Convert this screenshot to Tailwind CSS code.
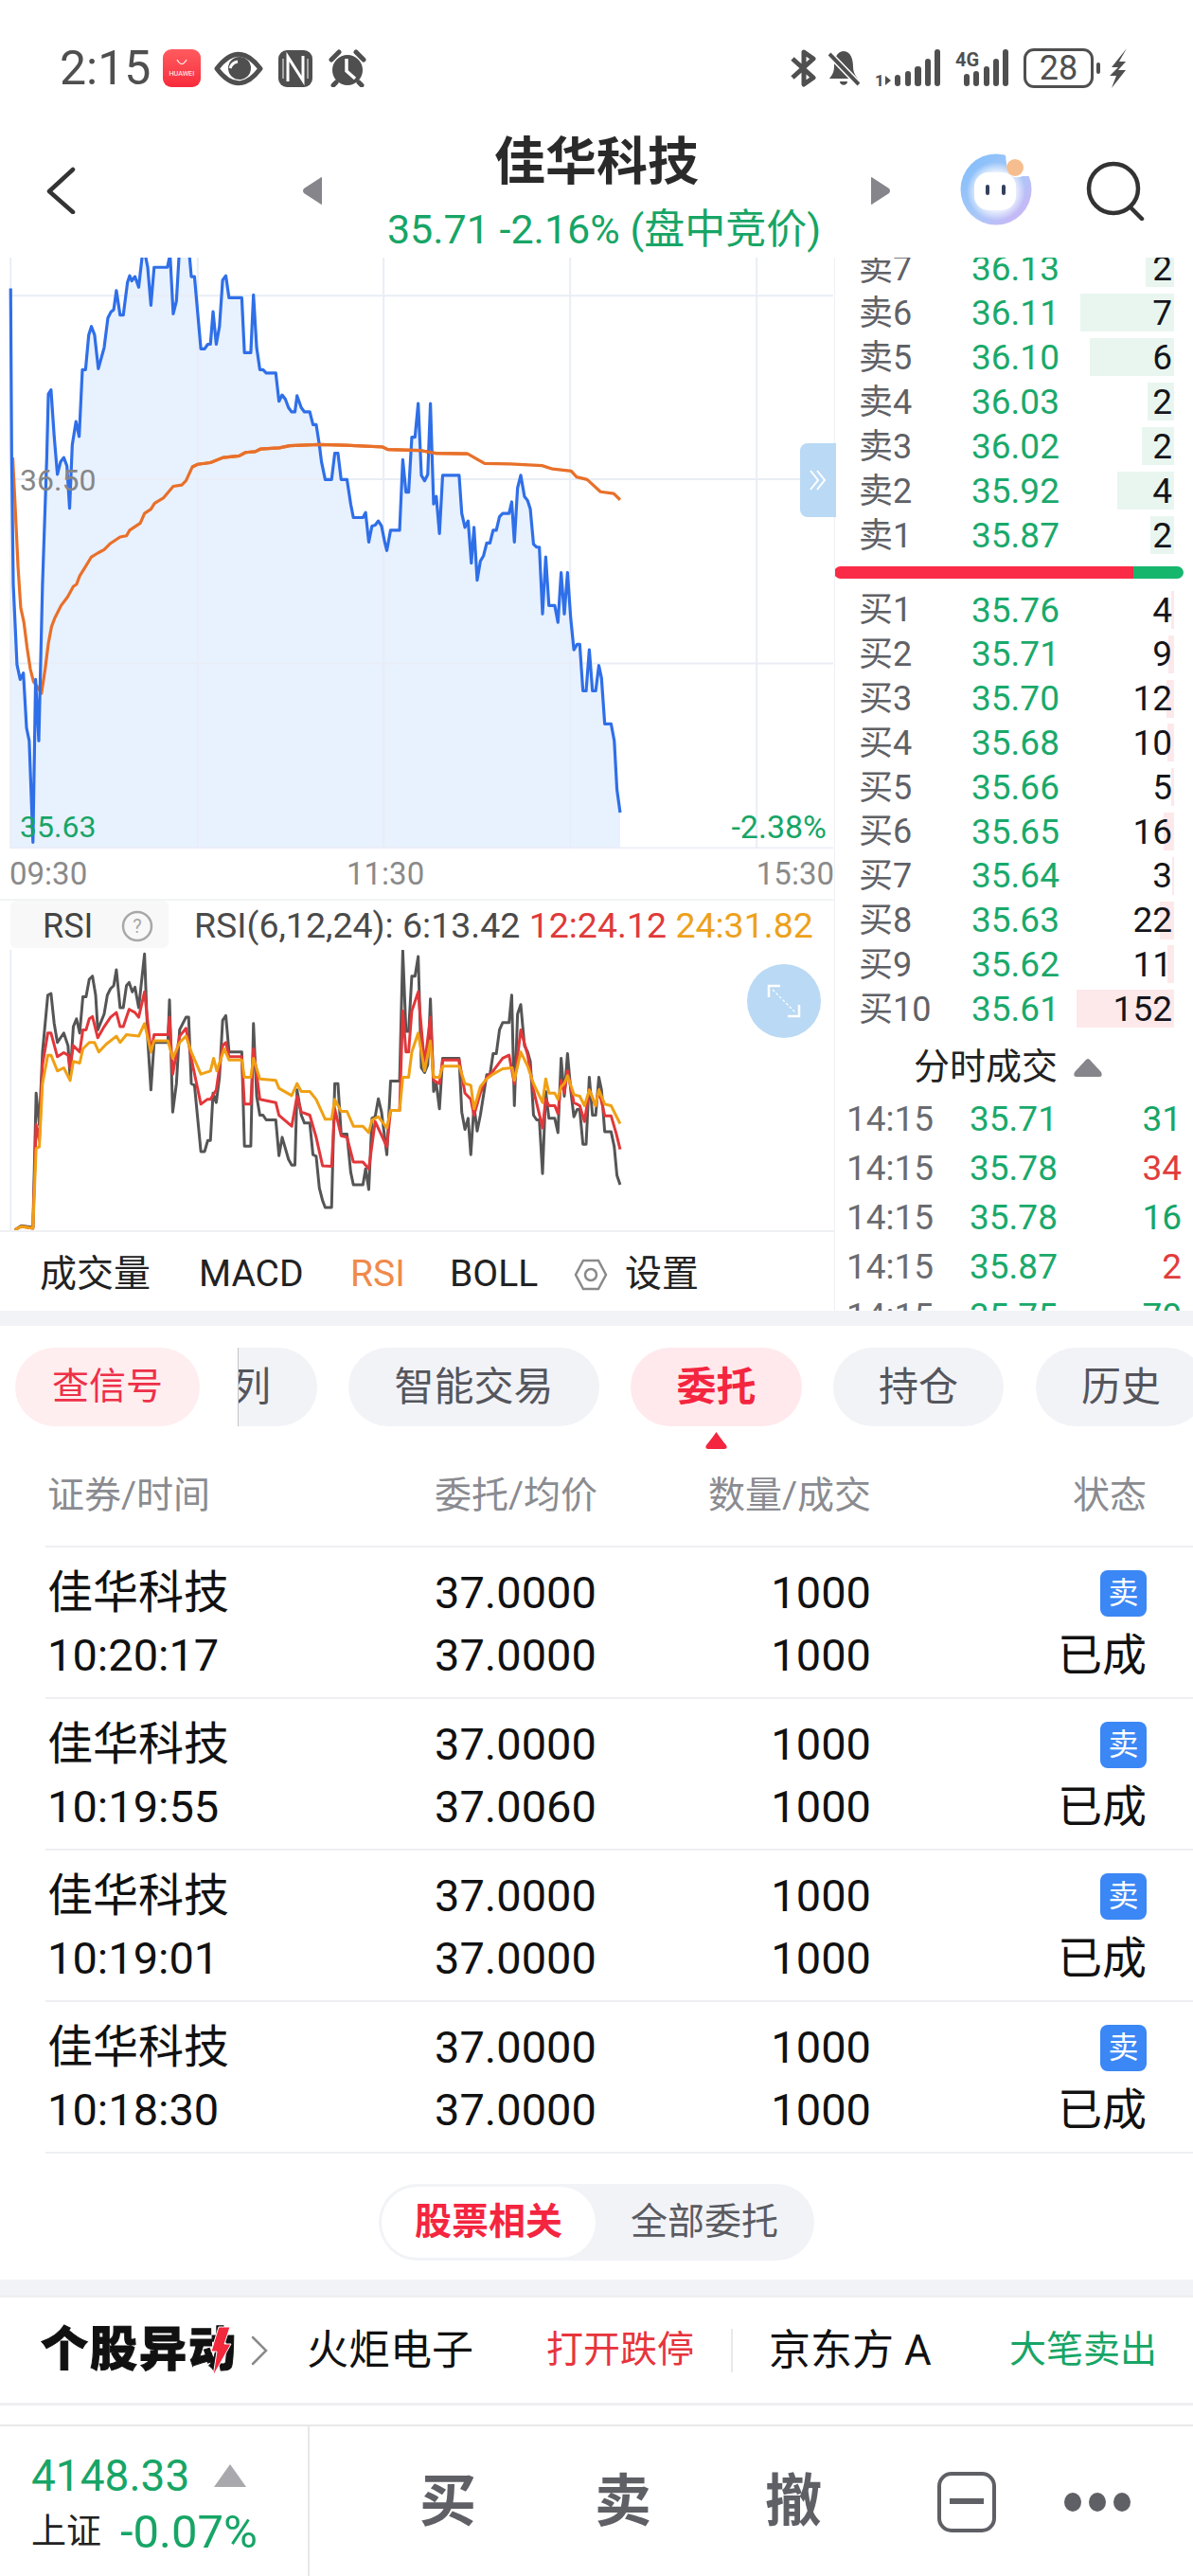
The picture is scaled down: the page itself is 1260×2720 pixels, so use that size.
<!DOCTYPE html>
<html lang="zh-CN">
<head>
  <meta charset="UTF-8" />
  <title>佳华科技</title>
  <script src="https://cdn.jsdelivr.net/npm/@tailwindcss/browser@4"></script>
</head>
<body class="bg-white text-[#111] font-['Roboto','Noto_Sans_CJK_SC',sans-serif]">
<div class="w-[1260px] h-[2720px] overflow-hidden">

  <!-- status bar -->
  <div class="h-[130px] flex items-start justify-between pl-[63px] pr-[70px] pt-[50px] text-[#4f4f4f]">
    <div class="flex items-center h-[44px]">
      <span class="text-[50px] leading-none w-[109px]">2:15</span>
      <div class="w-[40px] h-[40px] rounded-[9px] bg-gradient-to-b from-[#ff5a5f] to-[#f8283c] flex flex-col items-center justify-center text-white">
        <svg width="14" height="8" viewBox="0 0 14 8" fill="none" stroke="white" stroke-width="1.2"><path d="M2 1 Q7 10 12 1"/></svg>
        <span class="text-[8px] leading-[9px] mt-[3px] scale-x-90">HUAWEI</span>
      </div>
      <svg class="ml-[14px]" width="52" height="37" viewBox="0 0 52 37"><path d="M3 18.500 Q26 -12 49 18.500 Q26 49 3 18.500Z" fill="none" stroke="#4f4f4f" stroke-width="5" stroke-linejoin="round"/><circle cx="27" cy="18" r="12" fill="#4f4f4f"/><path d="M17 18 Q19 12 25 11" fill="none" stroke="white" stroke-width="3"/></svg>
      <svg class="ml-[16px]" width="36" height="39" viewBox="0 0 36 39"><rect width="36" height="39" rx="9" fill="#4f4f4f"/><path d="M10 33 V7 L26 32 V6" fill="none" stroke="white" stroke-width="3"/><path d="M5 9 V30 M31 9 V30" stroke="white" stroke-width="1"/></svg>
      <svg class="ml-[17px]" width="40" height="40" viewBox="0 0 40 40" fill="none"><circle cx="20" cy="22" r="16" fill="#4f4f4f"/><path d="M19 10 V23 L28 31" stroke="white" stroke-width="3.500"/><path d="M3 11 L11 3 M37 11 L29 3 M8 35 L5 38 M32 35 L35 38" stroke="#4f4f4f" stroke-width="5" stroke-linecap="round"/></svg>
    </div>
    <div class="flex items-center h-[44px]">
      <svg width="28" height="40" viewBox="0 0 28 40" fill="none" stroke="#4f4f4f" stroke-width="5" stroke-linejoin="round"><path d="M3 10 L25 30 L15 37 V3 L25 10 L3 30"/></svg>
      <svg class="ml-[13px]" width="33" height="40" viewBox="0 0 33 40"><path d="M16 2 C8 2 6 12 6 18 C6 24 4 27 1 31 H31 C28 27 26 24 26 18 C26 12 24 2 16 2Z M12 34 H20 C20 39 12 39 12 34Z" fill="#4f4f4f"/><path d="M1 5 L32 37" stroke="white" stroke-width="7"/><path d="M1 5 L32 37" stroke="#4f4f4f" stroke-width="4"/></svg>
      <svg class="ml-[16px] overflow-visible" width="69" height="40" viewBox="0 0 69 40" fill="#4f4f4f"><text x="0" y="39" font-size="17" font-weight="700" font-family="Roboto">1</text><path d="M11 28 L17 33 L11 38Z"/><rect x="21" y="27" width="6" height="12" rx="3"/><rect x="32" y="23" width="6" height="16" rx="3"/><rect x="42" y="18" width="7" height="21" rx="3"/><rect x="53" y="10" width="6" height="29" rx="3"/><rect x="63" y="0" width="6" height="39" rx="3"/></svg>
      <svg class="ml-[16px] overflow-visible" width="56" height="40" viewBox="0 0 56 40" fill="#4f4f4f"><text x="0" y="18" font-size="20" font-weight="700" font-family="Roboto">4G</text><rect x="9" y="26" width="6" height="13" rx="3"/><rect x="19" y="23" width="6" height="16" rx="3"/><rect x="30" y="18" width="6" height="21" rx="3"/><rect x="40" y="10" width="6" height="29" rx="3"/><rect x="50" y="0" width="6" height="39" rx="3"/></svg>
      <div class="ml-[16px] w-[74px] h-[42px] border-[3px] border-[#4f4f4f] rounded-[11px] flex items-center justify-center text-[36px] leading-none">28</div>
      <div class="ml-[3px] w-[4px] h-[12px] rounded-full bg-[#4f4f4f]"></div>
      <svg class="ml-[10px]" width="18" height="42" viewBox="0 0 18 42" fill="#4f4f4f"><path d="M18 0 L2 20 H9 L0 29 H7 L2 42 L17 23 H9 L17 14 H10Z"/></svg>
    </div>
  </div>

  <!-- title bar -->
  <div class="h-[142px] relative flex items-center">
    <svg class="absolute left-[48px] top-[46px]" width="32" height="50" viewBox="0 0 32 50" fill="none" stroke="#333" stroke-width="4.5" stroke-linecap="round" stroke-linejoin="round"><path d="M29 3 L4 26 L29 48"/></svg>
    <svg class="absolute left-[320px] top-[57px]" width="20" height="29" viewBox="0 0 20 29" fill="#85858b"><path d="M20 1 V28 Q20 30 18 28 L1 17 Q-1 14.500 1 12 L18 1 Q20 -1 20 1Z"/></svg>
    <div class="w-full text-center">
      <div class="text-[54px] leading-[62px] font-bold text-[#2a2a2a] mt-[4px]">佳华科技</div>
      <div class="text-[43px] leading-[46px] text-[#17a566] mt-[16px] pl-[16px]">35.71 -2.16% (盘中竞价)</div>
    </div>
    <svg class="absolute left-[920px] top-[57px]" width="20" height="29" viewBox="0 0 20 29" fill="#85858b"><path d="M0 1 V28 Q0 30 2 28 L19 17 Q21 14.500 19 12 L2 1 Q0 -1 0 1Z"/></svg>
    <svg class="absolute left-[1014px] top-[32px]" width="76" height="76" viewBox="0 0 76 76">
      <defs>
        <linearGradient id="ava" x1="0" y1="0" x2="1" y2="1"><stop offset="0" stop-color="#7cbcfb"/><stop offset="0.55" stop-color="#a9c8f8"/><stop offset="1" stop-color="#d5b0f5"/></linearGradient>
        <radialGradient id="avaIn"><stop offset="0.55" stop-color="#fff"/><stop offset="1" stop-color="#fff" stop-opacity="0"/></radialGradient>
      </defs>
      <circle cx="38" cy="38" r="37.500" fill="url(#ava)"/>
      <circle cx="38" cy="40" r="31" fill="url(#avaIn)"/>
      <path d="M48 2 L76 2 L76 24 L66 24 Q56 28 50 20Z" fill="white"/>
      <rect x="15" y="20" width="44" height="40" rx="15" fill="white"/>
      <rect x="27" y="33" width="4" height="11" rx="2" fill="#33415c"/><rect x="44" y="33" width="4" height="11" rx="2" fill="#33415c"/>
      <circle cx="58" cy="15" r="9" fill="#f6bd8e"/>
    </svg>
    <svg class="absolute left-[1146px] top-[39px]" width="64" height="64" viewBox="0 0 64 64" fill="none" stroke="#333" stroke-width="4.500"><circle cx="30" cy="30" r="26"/><path d="M48 50 L60 62" stroke-linecap="round"/></svg>
  </div>

  <!-- quote panel -->
  <div class="h-[1112px] flex overflow-hidden">
    <div class="w-[882px] shrink-0 border-r border-[#eef0f3] relative">
      <div class="relative h-[624px]">
        <svg class="absolute inset-0" width="880" height="624" viewBox="0 27 1568 1398" preserveAspectRatio="none">
          <polygon fill="#e8f1fe" points="20,1425 20,100 22,500 25,800 32,990 38,1025 44,1010 50,1140 55,1170 62,1410 67,1025 73,1170 80,800 88,500 91,350 96,340 102,450 108,540 114,510 120,500 126,520 131,620 136,470 143,415 149,450 155,292 161,292 167,210 172,190 178,210 185,290 196,240 203,170 209,155 214,150 219,105 226,163 232,163 240,85 244,70 248,82 254,72 261,97 267,30 270,0 278,50 284,140 290,50 315,50 320,20 326,160 332,130 338,0 355,0 360,72 366,72 378,243 385,243 391,232 396,232 401,155 407,232 413,190 419,80 425,70 431,122 455,122 460,252 472,252 477,115 483,240 489,292 495,292 501,300 519,300 525,367 531,352 537,362 543,382 549,392 555,392 559,354 567,382 573,392 583,392 589,422 595,422 601,470 605,510 612,552 624,552 630,490 636,490 642,552 653,552 660,610 665,642 683,642 688,630 694,700 700,662 706,660 712,650 718,662 724,700 728,720 735,672 752,672 758,505 764,582 769,582 775,452 781,452 787,372 793,542 799,555 805,540 810,372 816,610 821,592 827,680 833,542 864,542 869,632 875,665 881,650 887,750 892,665 898,790 904,745 910,732 916,702 922,702 928,672 934,672 940,640 946,632 958,632 963,605 968,700 974,572 980,542 987,592 993,602 998,622 1004,705 1010,712 1015,712 1021,870 1027,735 1033,850 1044,850 1050,890 1056,772 1062,870 1068,772 1074,880 1080,955 1086,942 1091,942 1097,1052 1103,1052 1109,955 1115,1052 1121,1052 1127,992 1132,1022 1138,1130 1150,1130 1156,1170 1161,1285 1167,1340 1167,1425"/>
          <path fill="none" stroke="#e9edf5" stroke-width="2" vector-effect="non-scaling-stroke" d="M20 117 H1568 M20 551 H1568 M20 987 H1568 M20 1424 H1568 M20 0 V1425 M372 0 V1425 M722 0 V1425 M1073 0 V1425 M1424 0 V1425"/>
          <polyline fill="none" stroke="#e8702a" stroke-width="3.200" vector-effect="non-scaling-stroke" stroke-linejoin="round" points="24,500 28,600 34,760 39,855 45,890 51,950 57,1000 63,1030 69,1040 78,1058 85,1000 91,940 97,900 103,880 115,850 127,830 138,805 144,800 150,780 160,760 172,735 184,726 196,718 208,703 226,688 238,685 244,672 264,655 272,632 284,622 291,608 308,595 326,568 342,565 350,555 362,522 372,516 396,512 420,500 450,496 462,488 480,486 490,480 526,477 545,472 600,469 650,471 720,475 730,481 790,483 820,490 880,491 912,514 960,515 1020,519 1040,527 1075,532 1085,546 1105,552 1130,581 1155,585 1167,600"/>
          <polyline fill="none" stroke="#2f6fe8" stroke-width="3.200" vector-effect="non-scaling-stroke" stroke-linejoin="round" points="20,100 22,500 25,800 32,990 38,1025 44,1010 50,1140 55,1170 62,1410 67,1025 73,1170 80,800 88,500 91,350 96,340 102,450 108,540 114,510 120,500 126,520 131,620 136,470 143,415 149,450 155,292 161,292 167,210 172,190 178,210 185,290 196,240 203,170 209,155 214,150 219,105 226,163 232,163 240,85 244,70 248,82 254,72 261,97 267,30 270,0 278,50 284,140 290,50 315,50 320,20 326,160 332,130 338,0 355,0 360,72 366,72 378,243 385,243 391,232 396,232 401,155 407,232 413,190 419,80 425,70 431,122 455,122 460,252 472,252 477,115 483,240 489,292 495,292 501,300 519,300 525,367 531,352 537,362 543,382 549,392 555,392 559,354 567,382 573,392 583,392 589,422 595,422 601,470 605,510 612,552 624,552 630,490 636,490 642,552 653,552 660,610 665,642 683,642 688,630 694,700 700,662 706,660 712,650 718,662 724,700 728,720 735,672 752,672 758,505 764,582 769,582 775,452 781,452 787,372 793,542 799,555 805,540 810,372 816,610 821,592 827,680 833,542 864,542 869,632 875,665 881,650 887,750 892,665 898,790 904,745 910,732 916,702 922,702 928,672 934,672 940,640 946,632 958,632 963,605 968,700 974,572 980,542 987,592 993,602 998,622 1004,705 1010,712 1015,712 1021,870 1027,735 1033,850 1044,850 1050,890 1056,772 1062,870 1068,772 1074,880 1080,955 1086,942 1091,942 1097,1052 1103,1052 1109,955 1115,1052 1121,1052 1127,992 1132,1022 1138,1130 1150,1130 1156,1170 1161,1285 1167,1340"/>
          <path fill="none" stroke="#e8702a" stroke-width="3.200" vector-effect="non-scaling-stroke" d="M362 522 L372 516 L396 512 L420 500 L450 496 L462 488 L480 486 L490 480 L526 477 L545 472 L600 469 L650 471 L720 475 L730 481 L790 483 L820 490 L880 491"/>
        </svg>
        <span class="absolute left-[21px] top-[217px] text-[32px] leading-[36px] text-[#868686]">36.50</span>
        <span class="absolute left-[21px] top-[583px] text-[32px] leading-[36px] text-[#17a566]">35.63</span>
        <span class="absolute right-[8px] top-[583px] text-[34px] leading-[36px] text-[#17a566]">-2.38%</span>
        <div class="absolute left-[845px] top-[196px] w-[38px] h-[78px] bg-[#b9d9f5] rounded-l-[8px] flex items-center justify-center">
          <svg width="20" height="22" viewBox="0 0 20 22" fill="none" stroke="white" stroke-width="2"><path d="M2 1 L10 11 L2 21 M9 1 L17 11 L9 21"/></svg>
        </div>
      </div>
      <div class="h-[55px] flex items-center justify-between pl-[10px] text-[33px] text-[#8a8a8a] border-b-2 border-[#f2f3f5] relative">
        <span>09:30</span>
        <span class="absolute left-[366px]">11:30</span>
        <span>15:30</span>
      </div>
      <div class="h-[50px] flex items-center ml-[11px]">
        <div class="w-[167px] h-[50px] bg-[#f8f8f8] rounded-[6px] flex items-center pl-[34px] pt-[3px] text-[36px] text-[#444]">
          <span>RSI</span>
          <svg class="ml-[30px]" width="34" height="34" viewBox="0 0 34 34"><circle cx="17" cy="17" r="15" fill="none" stroke="#a8a8a8" stroke-width="2.500"/><text x="17" y="24" text-anchor="middle" font-size="20" fill="#a8a8a8" font-family="Roboto">?</text></svg>
        </div>
        <div class="ml-[27px] pt-[3px] text-[37.5px] text-[#4a4a4a] whitespace-nowrap">RSI(6,12,24): 6:13.42 <span class="text-[#df3a3a]">12:24.12</span> <span class="text-[#eda11b]">24:31.82</span></div>
      </div>
      <div class="relative h-[298px] mt-[2px] border-b-2 border-[#eef0f3]">
        <svg class="absolute inset-0" width="880" height="296" viewBox="0 197 1568 887" preserveAspectRatio="none">
          <path vector-effect="non-scaling-stroke" stroke="#e9edf5" stroke-width="2" d="M20 197 V1083"/>
          <polyline fill="none" stroke="#555" stroke-width="3" vector-effect="non-scaling-stroke" stroke-linejoin="round" points="28,1083 40,1070 62,1075 68,650 74,750 80,520 90,340 96,335 102,430 108,490 120,460 128,500 132,600 138,440 144,415 150,460 156,345 162,345 168,290 174,280 180,340 184,450 196,400 202,340 208,320 214,310 219,260 226,380 232,380 238,310 243,300 249,330 254,315 261,380 272,210 278,480 284,640 290,490 316,490 319,355 325,710 332,620 338,450 350,410 355,410 360,620 366,625 378,835 385,835 391,800 396,800 401,650 407,680 413,600 419,420 425,405 431,520 455,520 460,818 472,818 477,430 483,660 489,720 495,720 501,735 519,735 525,848 531,790 543,860 549,878 555,878 559,640 567,720 573,745 583,745 589,845 595,850 601,950 607,990 612,1012 624,1012 630,620 636,620 642,780 653,780 660,900 665,940 683,940 688,890 694,955 700,730 706,725 712,668 718,710 728,845 735,612 752,612 758,200 764,455 769,455 775,280 781,280 787,218 793,570 799,585 805,560 810,352 816,645 821,620 827,700 833,540 864,540 869,710 875,765 881,730 886,845 892,690 898,770 904,720 916,592 922,592 928,525 934,525 940,450 946,427 958,427 963,340 968,690 974,400 980,370 987,500 993,520 998,550 1004,720 1010,735 1015,735 1021,905 1027,645 1033,730 1044,730 1050,775 1056,540 1062,660 1068,525 1074,640 1080,725 1086,702 1091,702 1097,812 1103,812 1109,600 1115,720 1121,720 1127,600 1132,640 1138,772 1150,772 1156,820 1161,910 1167,940"/>
          <polyline fill="none" stroke="#e2373a" stroke-width="3" vector-effect="non-scaling-stroke" stroke-linejoin="round" points="28,1083 40,1072 62,1078 68,750 74,800 80,560 90,460 96,460 108,535 120,522 128,530 132,570 138,500 150,520 156,450 162,450 168,415 174,408 184,475 196,440 208,410 219,395 226,440 232,440 243,385 254,395 261,410 272,330 284,520 290,465 316,465 319,410 325,590 338,470 350,445 360,540 378,685 390,670 396,670 407,640 419,500 425,490 431,535 455,535 460,685 472,685 477,510 489,670 519,680 525,720 549,755 559,660 567,710 583,720 595,790 607,880 624,882 630,700 642,785 653,790 665,868 683,868 694,890 706,740 728,820 735,705 752,705 758,390 764,520 769,520 775,390 787,330 799,560 810,410 816,610 827,620 833,545 864,545 875,650 886,670 892,720 904,650 916,600 928,580 946,540 958,530 968,620 980,450 993,530 1004,640 1021,760 1027,670 1033,690 1044,690 1050,715 1056,610 1062,650 1068,580 1080,680 1091,690 1100,740 1109,640 1121,690 1127,640 1138,722 1150,722 1160,780 1167,828"/>
          <polyline fill="none" stroke="#f0a014" stroke-width="3" vector-effect="non-scaling-stroke" stroke-linejoin="round" points="28,1083 40,1072 62,1078 68,825 74,820 80,620 90,530 96,530 108,580 120,570 132,610 138,550 150,555 156,510 168,490 178,490 186,520 200,495 219,470 226,490 238,465 261,470 272,430 284,520 290,485 316,485 325,540 338,490 350,470 360,520 378,590 396,580 402,540 408,580 422,510 431,545 455,545 460,600 472,600 477,540 489,605 519,610 525,635 549,658 559,620 567,645 583,645 595,670 612,733 624,733 630,670 642,708 653,708 665,755 683,755 694,775 700,735 712,725 728,760 735,705 752,705 758,600 769,600 775,520 787,460 799,580 810,485 816,600 827,600 833,565 864,565 875,620 886,625 892,700 904,630 916,605 928,590 946,573 964,570 968,610 980,520 993,565 1004,620 1021,680 1027,605 1033,650 1044,650 1050,670 1056,630 1062,620 1068,595 1080,655 1091,660 1100,690 1109,640 1121,690 1127,640 1138,685 1150,690 1167,747"/>
        </svg>
        <div class="absolute left-[789px] top-[15px] w-[78px] h-[78px] rounded-full bg-[#b9d9f5] flex items-center justify-center">
          <svg width="36" height="36" viewBox="0 0 36 36" fill="none" stroke="white" stroke-width="2.5"><path d="M2 14 V2 H14 M34 22 V34 H22"/><path d="M6 6 L30 30" stroke-width="1.200" stroke-dasharray="3 2"/></svg>
        </div>
      </div>
      <div class="h-[81px] flex items-center pt-[8px] pl-[42px] text-[39px] text-[#222]">
        <span class="w-[168px]">成交量</span>
        <span class="w-[160px]">MACD</span>
        <span class="w-[105px] text-[#f08a4b]">RSI</span>
        <span class="w-[131px]">BOLL</span>
        <svg width="36" height="36" viewBox="0 0 36 36" fill="none" stroke="#8a8a8a" stroke-width="2.500"><path d="M10 3 H26 L34 18 L26 33 H10 L2 18Z"/><circle cx="18" cy="18" r="6"/></svg>
        <span class="ml-[18px]">设置</span>
      </div>
    </div>

    <!-- order book -->
    <div class="flex-1 relative overflow-hidden">
      <div id="asks" class="mt-[-12px]"></div>
      <div class="mt-[9px] h-[13px] flex rounded-full overflow-hidden mr-[10px] -ml-[1px]">
        <div class="w-[316px] bg-[#fa2b46]"></div>
        <div class="flex-1 bg-[#17b66d]"></div>
      </div>
      <div id="bids" class="mt-[10px]"></div>
      <div class="mt-[12px] h-[52px] flex items-center pl-[83px] text-[38px] text-[#222]">
        <span>分时成交</span>
        <svg class="ml-[17px]" width="30" height="20" viewBox="0 0 30 20" fill="#85858b"><path d="M13 2 Q15 0 17 2 L29 15 Q31 20 27 20 H3 Q-1 20 1 15Z"/></svg>
      </div>
      <div id="ticks" class="mt-[3px]"></div>
    </div>
  </div>

  <div class="h-[16px] bg-[#f2f3f7]"></div>

  <!-- tabs -->
  <div class="h-[234px] relative overflow-hidden">
    <div class="flex items-center pt-[23px] text-[42px] text-[#55565c]">
      <div class="ml-[16px] w-[195px] h-[83px] shrink-0 rounded-full bg-[#ffeeef] text-[#ee3049] text-[39px] flex items-center justify-center">查信号</div>
      <div class="ml-[40px] w-[84px] h-[83px] shrink-0 rounded-r-full bg-[#f2f3f7] border-l border-[#c4c4c8] overflow-hidden flex items-center"><span class="-ml-[8px]">列</span></div>
      <div class="ml-[33px] w-[265px] h-[83px] shrink-0 rounded-full bg-[#f2f3f7] flex items-center justify-center">智能交易</div>
      <div class="ml-[33px] w-[181px] h-[83px] shrink-0 rounded-full bg-[#ffe9ec] text-[#f4253f] font-bold flex items-center justify-center">委托</div>
      <div class="ml-[33px] w-[180px] h-[83px] shrink-0 rounded-full bg-[#f2f3f7] flex items-center justify-center">持仓</div>
      <div class="ml-[34px] w-[180px] h-[83px] shrink-0 rounded-full bg-[#f2f3f7] flex items-center justify-center">历史</div>
    </div>
    <svg class="absolute left-[745px] top-[112px]" width="23" height="18" viewBox="0 0 23 18" fill="#f4253f"><path d="M11.500 0 Q14 4 22 14 Q24 18 20 18 H3 Q-1 18 1 14 Q9 4 11.500 0Z"/></svg>
    <div class="absolute left-0 top-[156px] w-full flex pl-[50px] text-[39px] leading-[46px] text-[#8a8b90]">
      <span class="w-[409px]">证券/时间</span>
      <span class="w-[200px]">委托/均价</span>
      <span class="w-[261px] text-right">数量/成交</span>
      <span class="w-[291px] text-right">状态</span>
    </div>
    <div class="absolute left-[48px] right-0 bottom-0 h-[2px] bg-[#eeeff2]"></div>
  </div>

  <div id="orders" class="ml-[48px]"></div>

  <!-- toggle -->
  <div class="h-[133px] flex justify-center pt-[32px]">
    <div class="w-[460px] h-[81px] rounded-full bg-[#f2f3f7] flex items-center p-[3px] text-[39px] text-[#5a5b61]">
      <div class="w-[226px] h-[75px] rounded-full bg-white text-[#f4253f] font-bold flex items-center justify-center">股票相关</div>
      <div class="ml-[37px]">全部委托</div>
    </div>
  </div>

  <div class="h-[16px] bg-[#f2f3f7]"></div>

  <!-- ticker -->
  <div class="h-[117px] border-y-[3px] border-[#efeff1] flex items-center relative whitespace-nowrap">
    <span class="ml-[43px] w-[206px] text-[50px] font-black tracking-[2px] text-[#111] [-webkit-text-stroke:1px_#111] relative">个股异动
      <svg class="absolute left-[178px] top-[12px]" width="24" height="54" viewBox="0 0 24 54" fill="#f2283c" stroke="white" stroke-width="1"><path d="M10 1 H22 L16 19 H23 L4 53 L8 27 H2Z"/></svg>
    </span>
    <svg class="ml-[16px]" width="18" height="32" viewBox="0 0 18 32" fill="none" stroke="#8a8a8a" stroke-width="2.500" stroke-linecap="round"><path d="M2 2 L16 16 L2 30"/></svg>
    <span class="ml-[41px] w-[253px] text-[44px]">火炬电子</span>
    <span class="w-[195px] text-[39px] text-[#e7343c]">打开跌停</span>
    <div class="w-[2px] h-[46px] bg-[#e8e8ea]"></div>
    <span class="ml-[38px] w-[254px] text-[44px]">京东方 A</span>
    <span class="text-[39px] text-[#17a566]">大笔卖出</span>
  </div>

  <div class="h-[20px]"></div>

  <!-- bottom bar -->
  <div class="h-[161px] border-t-[2px] border-[#e8e8ea] flex">
    <div class="w-[327px] border-r-[2px] border-[#e8e8ea] pl-[33px] pt-[27px]">
      <div class="flex items-center h-[50px] text-[46px] text-[#17a566]">
        <span class="w-[193px]">4148.33</span>
        <svg width="34" height="24" viewBox="0 0 34 24" fill="#a9a9ad"><path d="M17 0 L34 24 H0Z"/></svg>
      </div>
      <div class="flex items-center h-[60px] mt-[5px]">
        <span class="text-[37px] text-[#222] w-[94px]">上证</span>
        <span class="text-[49px] text-[#17a566]">-0.07%</span>
      </div>
    </div>
    <div class="flex-1 flex items-center relative text-[60px] font-bold text-[#5f5f66]">
      <span class="ml-[116px]">买</span>
      <span class="ml-[125px]">卖</span>
      <span class="ml-[120px]">撤</span>
      <svg class="ml-[122px]" width="62" height="64" viewBox="0 0 62 64" fill="none" stroke="#5f5f66" stroke-width="4"><rect x="2" y="2" width="58" height="60" rx="13"/><path d="M13 31 H49" stroke-width="6"/></svg>
      <svg class="ml-[71px]" width="72" height="22" viewBox="0 0 72 22" fill="#5f5f66"><ellipse cx="10" cy="11" rx="9" ry="10"/><ellipse cx="36" cy="11" rx="9" ry="10"/><ellipse cx="62" cy="11" rx="9" ry="10"/></svg>
    </div>
  </div>
</div>

<script>
  const asks = [["卖7","36.13","2",30],["卖6","36.11","7",99],["卖5","36.10","6",89],["卖4","36.03","2",28],["卖3","36.02","2",34],["卖2","35.92","4",60],["卖1","35.87","2",25]];
  const bids = [["买1","35.76","4",3],["买2","35.71","9",6],["买3","35.70","12",8],["买4","35.68","10",7],["买5","35.66","5",3],["买6","35.65","16",11],["买7","35.64","3",2],["买8","35.63","22",15],["买9","35.62","11",7],["买10","35.61","152",103]];
  const ticks = [["35.71","31","text-[#17a566]"],["35.78","34","text-[#e13c3c]"],["35.78","16","text-[#17a566]"],["35.87","2","text-[#e13c3c]"],["35.75","70","text-[#17a566]"]];
  const orders = [["10:20:17","37.0000"],["10:19:55","37.0060"],["10:19:01","37.0000"],["10:18:30","37.0000"]];

  function bookRow(r, barClass, rowClass) {
    return `<div class="relative flex items-center ${rowClass} pl-[25px] pr-[22px] text-[37px]">
      <span class="absolute right-[20px] top-[3px] h-[40px] ${barClass}" style="width:${r[3]}px"></span>
      <span class="relative w-[119px] text-[36px] text-[#606166]">${r[0]}</span>
      <span class="relative text-[#1aa96b]">${r[1]}</span>
      <span class="relative ml-auto text-[#15151a]">${r[2]}</span>
    </div>`;
  }
  document.getElementById("asks").innerHTML = asks.map(r => bookRow(r, "bg-[#e8f6ef]", "h-[47px]")).join("");
  document.getElementById("bids").innerHTML = bids.map(r => bookRow(r, "bg-[#fde8ea]", "h-[46.8px]")).join("");

  document.getElementById("ticks").innerHTML = ticks.map(t => `
    <div class="flex items-center h-[52px] pl-[12px] pr-[12px] text-[37px]">
      <span class="w-[130px] text-[#6a6b70]">14:15</span>
      <span class="text-[#1aa96b]">${t[0]}</span>
      <span class="ml-auto ${t[2]}">${t[1]}</span>
    </div>`).join("");

  document.getElementById("orders").innerHTML = orders.map(o => `
    <div class="h-[160px] border-b-2 border-[#eeeff2] pl-[2px] pt-[15px] text-[47px] leading-[66px] text-[#111]">
      <div class="flex h-[66px]">
        <span class="w-[409px] text-[48px]">佳华科技</span>
        <span class="w-[200px]">37.0000</span>
        <span class="w-[261px] text-right">1000</span>
        <span class="w-[291px] flex justify-end items-center"><span class="w-[49px] h-[49px] rounded-[8px] bg-[#3b87f5] text-white text-[32px] leading-[49px] text-center">卖</span></span>
      </div>
      <div class="flex h-[66px]">
        <span class="w-[409px]">${o[0]}</span>
        <span class="w-[200px]">${o[1]}</span>
        <span class="w-[261px] text-right">1000</span>
        <span class="w-[291px] text-right">已成</span>
      </div>
    </div>`).join("");
</script>
</body>
</html>
